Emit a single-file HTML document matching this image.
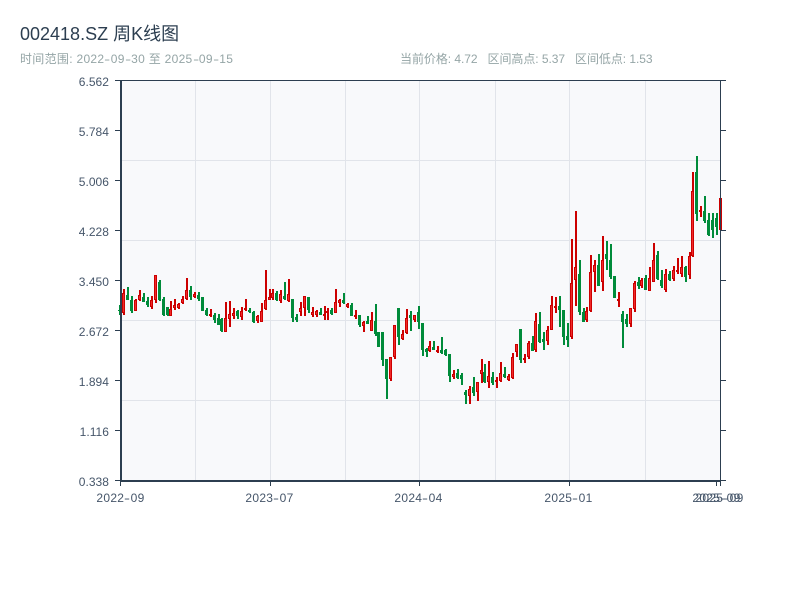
<!DOCTYPE html>
<html lang="zh">
<head>
<meta charset="utf-8">
<title>002418.SZ 周K线图</title>
<style>
html,body{margin:0;padding:0;background:#fff;width:800px;height:600px;overflow:hidden}
body{position:relative;font-family:"Liberation Sans","Noto Sans CJK SC",sans-serif}
.t{position:absolute;white-space:nowrap;line-height:16px;height:16px}
.title{left:20px;top:22px;font-size:18px;line-height:24px;height:24px;color:#2c3e50}
.sub{font-size:12px;color:#95a5a6;top:51px;letter-spacing:.3px}
.sub.n{letter-spacing:-.05px}
.y{font-size:12px;color:#46566a;right:691px;letter-spacing:.05px;text-align:right}
.x{font-size:12px;color:#46566a;top:490px;letter-spacing:.3px;transform:translateX(-50%)}
.h{display:inline-block;width:6.4px;text-align:center;transform:scaleX(1.5);letter-spacing:0}
svg{position:absolute;left:0;top:0}
</style>
</head>
<body>
<div class="t title">002418.SZ 周K线图</div>
<div class="t sub" style="left:20px">时间范围: 2022<span class="h">-</span>09<span class="h">-</span>30 至 2025<span class="h">-</span>09<span class="h">-</span>15</div>
<div class="t sub n" style="left:400px">当前价格: 4.72</div>
<div class="t sub n" style="left:487.5px">区间高点: 5.37</div>
<div class="t sub n" style="left:575px">区间低点: 1.53</div>

<svg id="c" width="800" height="600" viewBox="0 0 800 600" shape-rendering="crispEdges">
<rect x="121" y="81" width="599" height="400" fill="#f8f9fb"/>
<g fill="#e1e4ea">
<rect x="121" y="160" width="599" height="1"/>
<rect x="121" y="240" width="599" height="1"/>
<rect x="121" y="320" width="599" height="1"/>
<rect x="121" y="400" width="599" height="1"/>
<rect x="195" y="81" width="1" height="400"/>
<rect x="270" y="81" width="1" height="400"/>
<rect x="345" y="81" width="1" height="400"/>
<rect x="419" y="81" width="1" height="400"/>
<rect x="495" y="81" width="1" height="400"/>
<rect x="569" y="81" width="1" height="400"/>
<rect x="645" y="81" width="1" height="400"/>
</g>
<g id="k"></g>
<g fill="#2c3e50">
<rect x="120" y="80" width="2" height="402"/>
<rect x="120" y="480" width="600" height="2"/>
<rect x="120" y="80" width="600" height="1"/>
<rect x="720" y="80" width="1" height="402"/>
<rect x="115" y="80" width="5" height="1"/>
<rect x="115" y="130" width="5" height="1"/>
<rect x="115" y="180" width="5" height="1"/>
<rect x="115" y="230" width="5" height="1"/>
<rect x="115" y="280" width="5" height="1"/>
<rect x="115" y="330" width="5" height="1"/>
<rect x="115" y="380" width="5" height="1"/>
<rect x="115" y="430" width="5" height="1"/>
<rect x="115" y="480" width="5" height="1"/>
<rect x="721" y="80" width="5" height="1"/>
<rect x="721" y="130" width="5" height="1"/>
<rect x="721" y="180" width="5" height="1"/>
<rect x="721" y="230" width="5" height="1"/>
<rect x="721" y="280" width="5" height="1"/>
<rect x="721" y="330" width="5" height="1"/>
<rect x="721" y="380" width="5" height="1"/>
<rect x="721" y="430" width="5" height="1"/>
<rect x="721" y="480" width="5" height="1"/>
<rect x="120" y="482" width="1" height="4"/>
<rect x="270" y="482" width="1" height="4"/>
<rect x="419" y="482" width="1" height="4"/>
<rect x="569" y="482" width="1" height="4"/>
<rect x="716" y="482" width="1" height="4"/>
<rect x="720" y="482" width="1" height="4"/>
</g>
</svg>

<div class="t y" style="top:74px">6.562</div>
<div class="t y" style="top:124px">5.784</div>
<div class="t y" style="top:174px">5.006</div>
<div class="t y" style="top:224px">4.228</div>
<div class="t y" style="top:274px">3.450</div>
<div class="t y" style="top:324px">2.672</div>
<div class="t y" style="top:374px">1.894</div>
<div class="t y" style="top:424px">1.116</div>
<div class="t y" style="top:474px">0.338</div>

<div class="t x" style="left:120.5px">2022<span class="h">-</span>09</div>
<div class="t x" style="left:269.5px">2023<span class="h">-</span>07</div>
<div class="t x" style="left:418.5px">2024<span class="h">-</span>04</div>
<div class="t x" style="left:568.5px">2025<span class="h">-</span>01</div>
<div class="t x" style="left:716.5px">2025<span class="h">-</span>09</div>
<div class="t x" style="left:719.5px">2025<span class="h">-</span>09</div>

<script>
var d=[[0,305,310,310,315],[1,289,293,313,315],[0,287,295,300,300],[0,296,300,311,313],[1,299,300,311,311],[1,290,295,300,301],[0,293,297,302,302],[0,297,301,305,307],[1,296,300,307,309],[1,275,275,300,303],
[0,280,282,300,301],[0,297,299,315,316],[0,307,307,315,316],[1,301,309,316,316],[1,299,305,308,310],[1,303,304,308,309],[1,296,299,303,304],[1,278,290,299,300],[0,286,290,297,300],[1,292,294,297,298],
[0,292,295,299,301],[0,297,297,311,311],[0,308,310,315,316],[1,309,314,316,317],[0,313,315,320,323],[0,314,318,325,325],[0,318,319,331,332],[1,302,318,332,332],[1,301,314,319,327],[1,308,313,316,319],
[0,310,311,316,319],[1,307,311,317,320],[1,299,308,310,311],[0,308,310,312,313],[0,311,312,322,323],[1,315,316,321,323],[1,303,311,322,322],[1,270,300,309,310],[1,289,297,300,300],[1,289,293,298,300],
[0,291,293,300,301],[1,290,294,301,303],[0,282,296,299,300],[1,279,294,301,302],[0,299,299,318,322],[0,314,317,320,322],[1,302,308,312,316],[1,296,296,308,316],[0,297,297,310,313],[1,307,312,315,317],
[1,310,311,315,317],[0,308,312,315,315],[1,306,314,316,320],[1,308,311,313,320],[0,308,310,314,315],[1,289,302,313,313],[1,299,300,303,307],[0,293,300,303,304],[1,303,304,307,308],[0,303,305,316,316],
[1,310,315,317,319],[0,315,315,325,327],[1,321,322,326,332],[0,316,321,324,324],[1,312,320,331,331],[0,304,321,334,336],[0,332,332,347,347],[0,332,332,360,366],[0,359,359,379,399],[1,357,357,379,381],
[1,325,325,357,359],[0,308,308,337,345],[1,330,334,339,340],[1,309,318,333,334],[0,311,315,318,331],[1,315,315,320,322],[0,306,312,322,329],[0,323,323,350,356],[0,348,349,352,357],[1,341,346,351,352],
[0,341,347,350,350],[1,346,350,352,353],[0,337,350,353,354],[0,349,350,355,356],[0,354,354,376,382],[1,370,374,377,379],[0,369,373,378,379],[0,373,375,379,385],[0,390,392,395,404],[1,386,389,396,404],
[0,377,387,393,396],[1,382,382,392,401],[1,359,370,374,383],[0,364,372,382,383],[1,361,376,382,388],[0,372,377,383,385],[1,377,380,382,388],[1,362,373,381,382],[0,367,374,377,378],[1,374,376,380,381],
[1,353,357,378,379],[1,344,344,352,357],[0,329,329,360,363],[1,354,358,360,363],[1,341,343,357,359],[0,336,343,351,351],[1,313,321,350,352],[0,312,324,342,343],[0,332,339,342,350],[1,326,330,341,345],
[1,296,305,330,330],[1,297,306,308,313],[0,296,306,310,327],[0,310,310,337,345],[0,323,336,340,347],[1,239,283,337,339],[1,211,267,280,306],[0,260,274,312,315],[0,308,312,322,322],[1,307,311,320,322],
[1,255,272,311,312],[1,260,265,272,292],[0,254,265,286,286],[1,236,260,282,291],[0,241,254,259,270],[0,244,260,277,279],[0,276,276,298,298],[1,292,299,301,307],[0,311,314,322,348],[0,314,319,324,327],
[1,308,308,324,327],[1,281,283,309,312],[0,277,282,286,289],[1,278,280,286,288],[0,275,278,290,290],[1,267,278,291,291],[1,243,260,282,282],[0,251,255,279,280],[0,270,280,286,288],[1,269,274,290,292],
[0,271,274,280,281],[1,266,270,279,281],[1,258,270,272,274],[1,256,267,274,277],[0,266,267,277,282],[1,252,256,275,279],[1,172,191,256,257],[0,156,172,214,221],[1,206,210,212,217],[0,196,211,221,223],
[0,213,220,235,236],[0,213,220,230,238],[0,213,218,227,235],[1,198,198,230,230]];
var s='';
function r(x,y,w,h,f){return '<rect x="'+x+'" y="'+y+'" width="'+w+'" height="'+h+'" fill="'+f+'"/>';}
for(var i=0;i<d.length;i++){
  var a=d[i],X=Math.round(120.4+3.925*i),c=a[0]?'#cc0000':'#008b3a';
  s+=r(X-1,a[1],2,a[4]-a[1],c);
  s+=r(X-2,a[2],3,Math.max(a[3]-a[2],1),c);
  if(a[0]&&a[3]-a[2]>2){s+=r(X-1,a[2]+1,1,a[3]-a[2]-2,'#f02a2a');}
}
document.getElementById('k').innerHTML=s;
</script>
</body>
</html>
